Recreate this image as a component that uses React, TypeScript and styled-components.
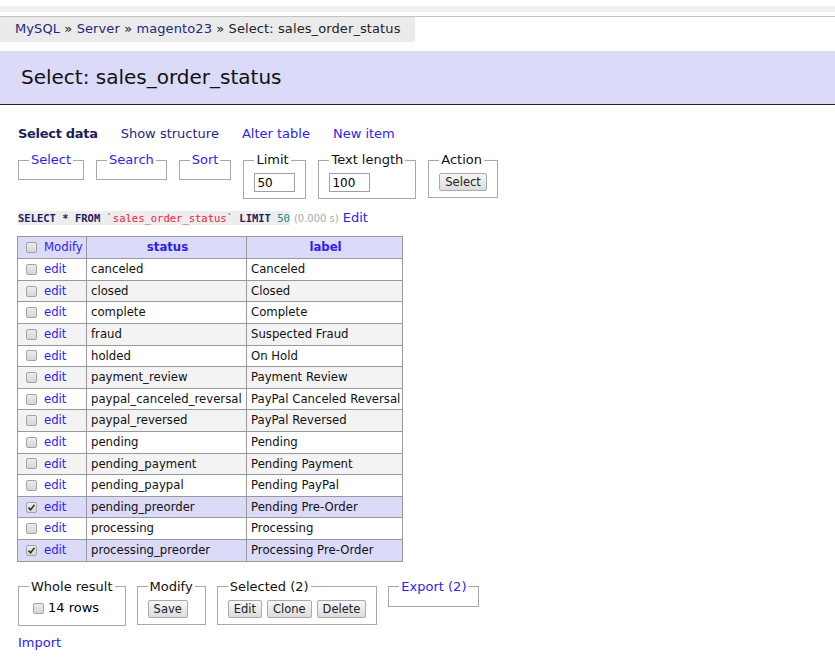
import * as React from 'react'
import styled, { createGlobalStyle } from 'styled-components'

const rows: [string, string, boolean][] = [
  ['canceled', 'Canceled', false],
  ['closed', 'Closed', false],
  ['complete', 'Complete', false],
  ['fraud', 'Suspected Fraud', false],
  ['holded', 'On Hold', false],
  ['payment_review', 'Payment Review', false],
  ['paypal_canceled_reversal', 'PayPal Canceled Reversal', false],
  ['paypal_reversed', 'PayPal Reversed', false],
  ['pending', 'Pending', false],
  ['pending_payment', 'Pending Payment', false],
  ['pending_paypal', 'Pending PayPal', false],
  ['pending_preorder', 'Pending Pre-Order', true],
  ['processing', 'Processing', false],
  ['processing_preorder', 'Processing Pre-Order', true],
]

const Check = ({ checked }: { checked?: boolean }) => (
  <Box>
    {checked && (
      <svg width="9" height="9" viewBox="0 0 9 9">
        <path d="M1.5 4.6 L3.6 6.8 L7.5 1.8" fill="none" stroke="#333" strokeWidth="1.6" />
      </svg>
    )}
  </Box>
)

const App = () => (
  <Page>
    <GlobalStyle />
    <TopStrip />
    <Breadcrumb>
      <Visited>MySQL</Visited> » <Visited>Server</Visited> » <Visited>magento23</Visited> » Select: sales_order_status
    </Breadcrumb>
    <Title>Select: sales_order_status</Title>
    <Content>
      <Links>
        <Current>Select data</Current>
        <Visited>Show structure</Visited>
        <Link>Alter table</Link>
        <Link>New item</Link>
      </Links>
      <FieldRow>
        <Fieldset>
          <Legend link>Select</Legend>
        </Fieldset>
        <Fieldset>
          <Legend link>Search</Legend>
        </Fieldset>
        <Fieldset>
          <Legend link>Sort</Legend>
        </Fieldset>
        <Fieldset>
          <Legend>Limit</Legend>
          <TextInput defaultValue="50" />
        </Fieldset>
        <Fieldset>
          <Legend>Text length</Legend>
          <TextInput defaultValue="100" />
        </Fieldset>
        <Fieldset>
          <Legend>Action</Legend>
          <Button>Select</Button>
        </Fieldset>
      </FieldRow>
      <SqlLine>
        <Code>
          <Kw>SELECT</Kw> <Kw>*</Kw> <Kw>FROM</Kw> <Ident>`sales_order_status`</Ident> <Kw>LIMIT</Kw> <Num>50</Num>
        </Code>
        <Time>(0.000 s)</Time>
        <Link>Edit</Link>
      </SqlLine>
      <Table>
        <colgroup>
          <Col w={69} />
          <Col w={160} />
          <Col w={156} />
        </colgroup>
        <thead>
          <tr>
            <HeadCell>
              <CellInner>
                <Check />
                <Link>Modify</Link>
              </CellInner>
            </HeadCell>
            <HeadCell center>
              <HeadLink>status</HeadLink>
            </HeadCell>
            <HeadCell center>
              <HeadLink>label</HeadLink>
            </HeadCell>
          </tr>
        </thead>
        <tbody>
          {rows.map(([status, label, checked], i) => (
            <Row key={status} odd={i % 2 === 1} checked={checked}>
              <Cell>
                <CellInner>
                  <Check checked={checked} />
                  <Link>edit</Link>
                </CellInner>
              </Cell>
              <Cell>{status}</Cell>
              <Cell>{label}</Cell>
            </Row>
          ))}
        </tbody>
      </Table>
      <FieldRow bottom>
        <Fieldset>
          <Legend>Whole result</Legend>
          <CheckLabel>
            <Check />
            14 rows
          </CheckLabel>
        </Fieldset>
        <Fieldset>
          <Legend>Modify</Legend>
          <Button>Save</Button>
        </Fieldset>
        <Fieldset>
          <Legend>Selected (2)</Legend>
          <Buttons>
            <Button>Edit</Button>
            <Button>Clone</Button>
            <Button>Delete</Button>
          </Buttons>
        </Fieldset>
        <Fieldset>
          <Legend link>Export (2)</Legend>
        </Fieldset>
      </FieldRow>
      <Import>
        <Link>Import</Link>
      </Import>
    </Content>
  </Page>
)

const GlobalStyle = createGlobalStyle`
  body {
    margin: 0;
    background: #fff;
    color: #000;
    font-family: "DejaVu Sans", Verdana, sans-serif;
    font-size: 13px;
    line-height: 1.25;
  }
`

const Page = styled.div`
  width: 835px;
  min-height: 658px;
  overflow: hidden;
`

const TopStrip = styled.div`
  height: 16px;
  border-bottom: 1px solid #c4c4c4;
  background: linear-gradient(#fff 0, #fff 6px, #eef0f2 6px, #eef0f2 12px, #fff 12px);
`

const Breadcrumb = styled.div`
  display: inline-block;
  height: 25px;
  line-height: 24px;
  padding: 0 14px 0 15px;
  background: #ebebeb;
  white-space: nowrap;
  letter-spacing: 0.1px;
  color: #222;
`

const Link = styled.span`
  color: #2d1fe6;
  cursor: pointer;
`

const Visited = styled.span`
  color: #26267f;
  cursor: pointer;
`

const Current = styled(Visited)`
  font-weight: bold;
  letter-spacing: -0.3px;
  color: #1e1e5a;
`

const Title = styled.h2`
  margin: 9px 0 0;
  height: 53px;
  padding: 0 21px;
  background: #dcdaf9;
  border-bottom: 1px solid #222;
  font-size: 20px;
  font-weight: normal;
  line-height: 53px;
  color: #111;
`

const Content = styled.div`
  padding: 0 18px;
`

const Links = styled.div`
  display: flex;
  gap: 23px;
  margin-top: 21px;
  line-height: 16px;
`

const FieldRow = styled.div<{ bottom?: boolean }>`
  display: flex;
  align-items: flex-start;
  gap: ${p => (p.bottom ? '11px' : '12px')};
  margin-top: ${p => (p.bottom ? '17px' : '10px')};
`

const Fieldset = styled.fieldset`
  margin: 0;
  padding: 5px 10px 6px;
  border: 1px solid #a8a8a8;
`

const Legend = styled.legend<{ link?: boolean }>`
  padding: 0 2px;
  line-height: 16px;
  color: ${p => (p.link ? '#2d1fe6' : '#111')};
`

const TextInput = styled.input`
  box-sizing: border-box;
  width: 41px;
  height: 19px;
  margin: 0;
  padding: 0 2px;
  border: 1px solid #a0a0a0;
  font-family: "DejaVu Sans", sans-serif;
  font-size: 12px;
  color: #000;
  outline: none;
`

const Button = styled.button`
  box-sizing: border-box;
  height: 18px;
  padding: 0 5px;
  border: 1px solid #aaa;
  border-radius: 2px;
  background: linear-gradient(#f7f7f7, #dcdcdc);
  font-family: "DejaVu Sans", sans-serif;
  font-size: 11.5px;
  line-height: 16px;
  color: #222;
`

const Buttons = styled.div`
  display: flex;
  gap: 5px;
`

const SqlLine = styled.div`
  display: flex;
  align-items: baseline;
  gap: 4px;
  margin-top: 11px;
`

const Code = styled.code`
  background: #ededed;
  font-family: "DejaVu Sans Mono", monospace;
  font-size: 10.5px;
  line-height: 14px;
  white-space: pre;
`

const Kw = styled.span`
  color: #1c1c5c;
  font-weight: bold;
`

const Ident = styled.span`
  color: #e8253a;
`

const Num = styled.span`
  color: #138a8a;
`

const Time = styled.span`
  font-size: 10px;
  color: #aaa;
`

const Table = styled.table`
  margin-top: 10px;
  margin-left: -1px;
  width: 385px;
  table-layout: fixed;
  border-collapse: collapse;
  font-size: 11.7px;
  line-height: 14.6px;
`

const Col = styled.col<{ w: number }>`
  width: ${p => p.w}px;
`

const HeadCell = styled.th<{ center?: boolean }>`
  background: #dcdaf9;
  border: 1px solid #999;
  padding: 3px 2px 3px 4px;
  height: 15px;
  text-align: ${p => (p.center ? 'center' : 'left')};
  font-weight: normal;
  white-space: nowrap;
`

const HeadLink = styled(Link)`
  font-weight: bold;
`

const Row = styled.tr<{ odd?: boolean; checked?: boolean }>`
  background: ${p => (p.checked ? '#dcdaf9' : p.odd ? '#f3f3f3' : '#fff')};
`

const Cell = styled.td`
  border: 1px solid #999;
  padding: 3px 2px 3px 4px;
  color: #111;
  white-space: nowrap;
  overflow: hidden;
`

const CellInner = styled.div`
  display: flex;
  align-items: center;
  gap: 7px;
  padding-left: 4px;
`

const Box = styled.span`
  box-sizing: border-box;
  display: inline-flex;
  align-items: center;
  justify-content: center;
  width: 11px;
  height: 11px;
  border: 1px solid #a4a4a4;
  border-radius: 2px;
  background: linear-gradient(#ececec, #d6d6d6);
`

const CheckLabel = styled.div`
  display: flex;
  align-items: center;
  gap: 4px;
  height: 18px;
  padding: 0 0 1px 4px;
`

const Import = styled.div`
  margin-top: 9px;
`

export default App
